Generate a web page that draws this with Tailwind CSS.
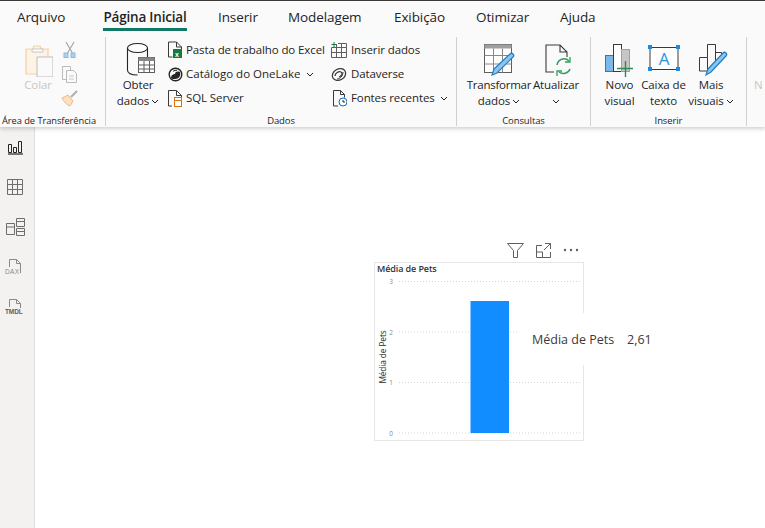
<!DOCTYPE html>
<html lang="pt"><head><meta charset="utf-8"><title>Power BI</title>
<script src="https://cdn.jsdelivr.net/npm/@tailwindcss/browser@4"></script></head>
<body class="m-0 bg-white">
<div class="w-[765px] h-[528px] overflow-hidden flex flex-col font-['Open_Sans','Noto_Sans',sans-serif] text-[#252423] text-[11.5px] tracking-[-0.1px]">
  <header class="relative z-10 h-[127px] bg-[#fafafa] border-t border-[#3b3a39] shadow-[0_2px_4px_rgba(0,0,0,0.18)] shrink-0">
    <nav class="flex h-[36px] pl-[17px] text-[13.5px] leading-[33px]">
      <div class="w-[86px]">Arquivo</div>
      <div class="w-[115px]"><div class="w-[84px] h-[30px] font-semibold text-center border-b-[3px] border-[#117865] whitespace-nowrap tracking-[-0.2px]">Página Inicial</div></div>
      <div class="w-[70px]">Inserir</div>
      <div class="w-[106px]">Modelagem</div>
      <div class="w-[82px]">Exibição</div>
      <div class="w-[84px]">Otimizar</div>
      <div>Ajuda</div>
    </nav>
    <div class="flex h-[89px]">
      <!-- Clipboard -->
      <section class="w-[106px] border-r border-[#d2d0ce] flex flex-col">
        <div class="flex flex-1 pt-[6px] pl-[23px]">
          <div class="w-[30px] flex flex-col items-center">
            <svg width="30" height="34" viewBox="0 0 30 34" fill="none"><path d="M3 6h7l1-3h6l1 3h7v25H3z" fill="#fdf3e6" stroke="#f3d1a6" stroke-width="1.2"/><path d="M9 6h11v3H9z" fill="#fff" stroke="#c8c6c4"/><path d="M14 14h16v20H14z" fill="#fafafa" stroke="#bdbbb9"/></svg>
            <span class="text-[#c8c6c4] leading-[16px]">Colar</span>
          </div>
          <div class="ml-[8px] -mt-[2px] flex flex-col w-[20px] gap-[5px]">
            <svg width="18" height="19" viewBox="0 0 18 19" fill="none"><path d="M5 1l7 12M13 1L6 13" stroke="#a8a6a4" stroke-width="1.2"/><rect x="3" y="12" width="4" height="4.500" fill="#a9d3f0" stroke="#8fb8d6"/><rect x="10" y="12" width="4" height="4.500" fill="#a9d3f0" stroke="#8fb8d6"/></svg>
            <svg width="18" height="19" viewBox="0 0 18 19" fill="none"><path d="M1.500 1.500h8v13h-8z" stroke="#bdbbb9"/><path d="M5.500 5.500h7l3 3v9h-10z" fill="#fafafa" stroke="#bdbbb9"/><path d="M8 11h5M8 14h5" stroke="#c8c6c4"/></svg>
            <svg width="18" height="18" viewBox="0 0 18 18" fill="none"><path d="M1 9l6-3 5 6-3 5C6 16 3 13 1 9z" fill="#fbe0c2" stroke="#eeb98a"/><path d="M10 8l6-6" stroke="#b3b1af" stroke-width="2.200"/></svg>
          </div>
        </div>
        <div class="text-[9.300px] leading-[16px] h-[13px] pl-[2px] whitespace-nowrap tracking-[-0.05px]">Área de Transferência</div>
      </section>
      <!-- Dados -->
      <section class="w-[351px] border-r border-[#d2d0ce] flex flex-col">
        <div class="flex flex-1 pt-[4px]">
          <div class="w-[64px] -mr-[2px] flex flex-col items-center">
            <svg class="ml-[5px] mt-[1px]" width="30" height="34" viewBox="0 0 30 34" fill="none"><path d="M1.500 6v22c0 3 4 5 10 5" stroke="#252423" stroke-width="1.100"/><path d="M21.500 6v9" stroke="#252423" stroke-width="1.100"/><ellipse cx="11.500" cy="6" rx="10" ry="4.500" fill="#fff" stroke="#252423" stroke-width="1.100"/><rect x="12.500" y="15.500" width="16" height="15" fill="#fff" stroke="#605e5c"/><rect x="12.500" y="15.500" width="16" height="3.500" fill="#8a8886"/><path d="M12.500 23h16M12.500 27h16M18 19v11.500M23.500 19v11.500" stroke="#605e5c"/></svg>
            <span class="mt-[1px] leading-[16px]">Obter</span>
            <span class="leading-[16px] flex items-center gap-[2px]">dados<svg width="8" height="5" viewBox="0 0 8 5" fill="none"><path d="M1 1l3 3 3-3" stroke="#252423"/></svg></span>
          </div>
          <div class="w-[163px] flex flex-col -mt-[3px]">
            <div class="h-[24px] flex items-center gap-[4px] whitespace-nowrap">
              <svg width="14" height="18" viewBox="0 0 14 18" fill="none"><path d="M.5 1h8l5 5v3M.5 1v15h4" stroke="#3b3a39"/><path d="M8.500 1v5h5" stroke="#3b3a39"/><rect x="5" y="8" width="9" height="9" fill="#107c41"/><text x="7" y="15.500" font-size="7" font-weight="700" fill="#fff" font-family="Liberation Sans">x</text></svg>
              <span>Pasta de trabalho do Excel</span>
            </div>
            <div class="h-[24px] flex items-center gap-[3px] whitespace-nowrap">
              <svg width="15" height="15" viewBox="0 0 15 15" fill="none"><circle cx="7.500" cy="7.500" r="6.300" stroke="#252423" stroke-width="1.400"/><path d="M3 11c0-3 2-4 4-4 0-2 2-3 5-2 1 4-1 7-5 7-2 0-3 0-4-1z" fill="#252423"/><path d="M5 4.500c1-1 3-1.500 4-1" stroke="#252423"/></svg>
              <span class="tracking-[0]">Catálogo do OneLake</span>
              <svg class="ml-[3px]" width="8" height="5" viewBox="0 0 8 5" fill="none"><path d="M1 1l3 3 3-3" stroke="#252423"/></svg>
            </div>
            <div class="h-[24px] flex items-center gap-[4px] whitespace-nowrap">
              <svg width="14" height="17" viewBox="0 0 14 17" fill="none"><path d="M4 16H.5V.500h8l5 5v3M8.500.500v5h5" stroke="#3b3a39"/><rect x="6.500" y="7.500" width="7" height="9" fill="#fff" stroke="#d9730d"/><path d="M6.500 10.500h7" stroke="#d9730d"/></svg>
              <span>SQL Server</span>
            </div>
          </div>
          <div class="flex-1 flex flex-col -mt-[3px]">
            <div class="h-[24px] flex items-center gap-[4px] whitespace-nowrap">
              <svg width="16" height="16" viewBox="0 0 16 16" fill="none"><path d="M.5 5.500h15v10H.5zM5.500 2v13.500M10.500 2v13.500M.5 10.500h15M7 1.500h8.500v4" stroke="#605e5c"/><path d="M3 0v5M.5 2.500h5" stroke="#107c41"/></svg>
              <span>Inserir dados</span>
            </div>
            <div class="h-[24px] flex items-center gap-[4px] whitespace-nowrap">
              <svg width="16" height="15" viewBox="0 0 16 15" fill="none"><ellipse cx="8" cy="7.500" rx="7" ry="5.500" transform="rotate(-30 8 7.500)" stroke="#3b3a39" stroke-width="1.300"/><path d="M4 9c0-3 4-5 6-4s1 4-2 5" stroke="#3b3a39" stroke-width="1.300"/><path d="M12 5c0 4-3 7-6 7" stroke="#3b3a39"/></svg>
              <span>Dataverse</span>
            </div>
            <div class="h-[24px] flex items-center gap-[4px] whitespace-nowrap pl-[2px]">
              <svg width="14" height="17" viewBox="0 0 14 17" fill="none"><path d="M5 16H.5V.500h7l4 4v3M7.500.500v4h4" stroke="#3b3a39"/><circle cx="10" cy="12" r="4" fill="#fff" stroke="#0f6cbd"/><path d="M10 10v2h2" stroke="#252423"/></svg>
              <span>Fontes recentes</span>
              <svg class="ml-[1px]" width="8" height="5" viewBox="0 0 8 5" fill="none"><path d="M1 1l3 3 3-3" stroke="#252423"/></svg>
            </div>
          </div>
        </div>
        <div class="text-[9.5px] leading-[16px] h-[13px] text-center">Dados</div>
      </section>
      <!-- Consultas -->
      <section class="w-[134px] border-r border-[#d2d0ce] flex flex-col">
        <div class="flex flex-1 pt-[6px]">
          <div class="w-[76px] flex flex-col items-center pl-[8px]">
            <svg class="ml-[2px] mt-[1px]" width="32" height="33" viewBox="0 0 32 33" fill="none"><rect x=".5" y=".5" width="27" height="28" fill="#fff" stroke="#605e5c"/><rect x=".5" y=".5" width="27" height="4" fill="#a19f9d"/><path d="M.5 11.500h27M.5 20h27M9.500 4.500v24M18.500 4.500v24" stroke="#8a8886"/><path d="M10 25L26 10c2-2 5 1 3 3L13 29l-5 2z" fill="#8cc4ec" stroke="#1f7fc4" stroke-width="1.200"/></svg>
            <span class="leading-[16px] whitespace-nowrap tracking-[-0.25px]">Transformar</span>
            <span class="leading-[16px] flex items-center gap-[2px]">dados<svg width="8" height="5" viewBox="0 0 8 5" fill="none"><path d="M1 1l3 3 3-3" stroke="#252423"/></svg></span>
          </div>
          <div class="w-[46px] flex flex-col items-center">
            <svg class="ml-[6px] mt-[1px]" width="28" height="33" viewBox="0 0 28 33" fill="none"><path d="M9 28H1V1h14l7 7v5M15 1v7h7" stroke="#3b3a39" stroke-width="1.100"/><path d="M12 21a7 7 0 0 1 12-4M25 25a7 7 0 0 1-11 3" stroke="#2e9e5b" stroke-width="1.500"/><path d="M25 13v5h-5M12 32v-5h5" stroke="#2e9e5b" stroke-width="1.300"/></svg>
            <span class="leading-[16px] whitespace-nowrap">Atualizar</span>
            <span class="h-[16px] flex items-center"><svg width="8" height="5" viewBox="0 0 8 5" fill="none"><path d="M1 1l3 3 3-3" stroke="#252423"/></svg></span>
          </div>
        </div>
        <div class="text-[9.5px] leading-[16px] h-[13px] text-center">Consultas</div>
      </section>
      <!-- Inserir -->
      <section class="w-[156px] border-r border-[#d2d0ce] flex flex-col">
        <div class="flex flex-1 pt-[6px] pl-[8px]">
          <div class="w-[41px] flex flex-col items-center">
            <svg class="ml-[3px] mt-[1px]" width="32" height="33" viewBox="0 0 32 33" fill="none"><rect x=".5" y="11.500" width="8" height="16" fill="#7db8e8" stroke="#1f7fc4"/><rect x="8.500" y=".5" width="8" height="27" fill="#fff" stroke="#3b3a39"/><rect x="16.500" y="5.500" width="8" height="22" fill="#c8c6c4" stroke="#a19f9d"/><path d="M20.500 17v16M12 24.500h16" stroke="#2e8b57" stroke-width="1.400"/></svg>
            <span class="leading-[16px]">Novo</span>
            <span class="leading-[16px]">visual</span>
          </div>
          <div class="w-[47px] flex flex-col items-center">
            <svg class="mt-[2px]" width="32" height="32" viewBox="0 0 32 32" fill="none"><rect x="2" y="2.500" width="28" height="22" fill="#fff" stroke="#3b3a39"/><path d="M0 0h4v4H0zM28 0h4v4h-4zM0 22h4v4H0zM28 22h4v4h-4z" fill="#1f8ae0"/><text x="16" y="20" font-size="17" text-anchor="middle" fill="#2b95dc" font-family="Open Sans">A</text></svg>
            <span class="leading-[16px] whitespace-nowrap">Caixa de</span>
            <span class="leading-[16px]">texto</span>
          </div>
          <div class="w-[48px] flex flex-col items-center">
            <svg class="ml-[5px] mt-[1px]" width="30" height="33" viewBox="0 0 30 33" fill="none"><path d="M.5 27V13.500h8V.5h8v8h6v6M8.500 13.500V27M16.500 .5V17M.5 27h8" stroke="#3b3a39"/><path d="M9 25L24 9c2-2 5 1 3 3L12 28l-5 3z" fill="#8cc4ec" stroke="#1f7fc4" stroke-width="1.200"/></svg>
            <span class="leading-[16px]">Mais</span>
            <span class="leading-[16px] flex items-center gap-[2px]">visuais<svg width="8" height="5" viewBox="0 0 8 5" fill="none"><path d="M1 1l3 3 3-3" stroke="#252423"/></svg></span>
          </div>
        </div>
        <div class="text-[9.5px] leading-[16px] h-[13px] text-center">Inserir</div>
      </section>
      <section class="flex-1 pl-[7px] pt-[40px] leading-[16px] text-[#c8c6c4]">N</section>
    </div>
  </header>

  <main class="flex flex-1 min-h-0">
    <aside class="w-[35px] bg-[#f3f2f1] border-r border-[#e1dfdd] flex flex-col pl-[5px] shrink-0">
      <div class="h-[40px] flex items-center"><svg width="20" height="16" viewBox="0 0 20 16" fill="none"><path d="M3 15h15" stroke="#252423" stroke-width="1.200"/><path d="M3.500 5.500h3v8h-3zM8.500 8.500h3v5h-3zM13.500 2.500h3v11h-3z" stroke="#252423"/></svg></div>
      <div class="h-[40px] flex items-center"><svg width="20" height="16" viewBox="0 0 20 16" fill="none"><path d="M2.500.5h15v15h-15zM2.500 5.500h15M2.500 10.500h15M7.500.5v15M12.500.5v15" stroke="#706e6c"/></svg></div>
      <div class="h-[40px] flex items-center"><svg width="20" height="19" viewBox="0 0 20 19" fill="none"><path d="M1.500 5.500h8v11h-8zM1.500 9h8M11.500.5h8v8h-8zM11.500 3.500h8M11.500 10.500h8v7h-8zM11.500 13.500h8" stroke="#706e6c"/></svg></div>
      <div class="h-[40px] flex items-center"><svg width="20" height="18" viewBox="0 0 20 18" fill="none"><path d="M4.500 9V1.500h7l4 4V15M11.500 1.500v4h4" stroke="#8a8886"/><text x="0" y="15.500" font-size="6.500" letter-spacing=".4" fill="#8a8886" font-family="Liberation Sans">DAX</text></svg></div>
      <div class="h-[40px] flex items-center"><svg width="22" height="18" viewBox="0 0 22 18" fill="none"><path d="M4.500 9V1.500h7l4 4V10M11.500 1.500v4h4" stroke="#8a8886"/><text x="0" y="15.500" font-size="6.500" font-weight="700" fill="#605e5c" font-family="Liberation Sans">TMDL</text></svg></div>
    </aside>
    <div class="relative flex-1 bg-white">
      <div class="absolute left-[339px] top-[112px] w-[210px]">
        <div class="h-[23px] pb-[1px] flex items-center justify-end gap-[12px] pr-[5px]">
          <svg width="17" height="15" viewBox="0 0 17 15" fill="none"><path d="M.5.5h16l-6 7v7h-4v-7z" stroke="#605e5c"/></svg>
          <svg width="15" height="15" viewBox="0 0 15 15" fill="none"><path d="M6 2.500H.5v12h14V9M.5 9h6v5.500M9 .5h5.500V6M14 1L8 7" stroke="#605e5c"/></svg>
          <svg width="16" height="4" viewBox="0 0 16 4"><circle cx="2" cy="2" r="1.200" fill="#605e5c"/><circle cx="8" cy="2" r="1.200" fill="#605e5c"/><circle cx="14" cy="2" r="1.200" fill="#605e5c"/></svg>
        </div>
        <svg class="block" width="210" height="179" viewBox="0 0 210 179" font-family="Open Sans">
          <rect x=".5" y=".5" width="209" height="178" fill="#fff" stroke="#e6e6e6"/>
          <text x="3" y="10" font-size="9" font-weight="600" fill="#333">Média de Pets</text>
          <g stroke="#d5d5d5" stroke-dasharray="1 2"><path d="M25 19.500h183M25 70h183M25 120.500h183M25 171h183"/></g>
          <g font-size="6.500" fill="#8a8a8a" text-anchor="middle"><text x="17" y="22">3</text><text x="17" y="72.500">2</text><text x="17" y="123">1</text><text x="17" y="173.500">0</text></g>
          <text transform="translate(11.500 95) rotate(-90)" font-size="8.300" fill="#252423" text-anchor="middle">Média de Pets</text>
          <rect x="96.500" y="39" width="38.500" height="132" fill="#118dff"/>
        </svg>
      </div>
      <div class="absolute left-[482px] top-[186px] w-[150px] h-[52px] bg-white flex items-center pl-[15px] pt-[3px] text-[12.500px] text-[#3b3a39] tracking-[0]">
        <span class="w-[95px] whitespace-nowrap">Média de Pets</span><span>2,61</span>
      </div>
    </div>
  </main>
</div>
</body></html>
